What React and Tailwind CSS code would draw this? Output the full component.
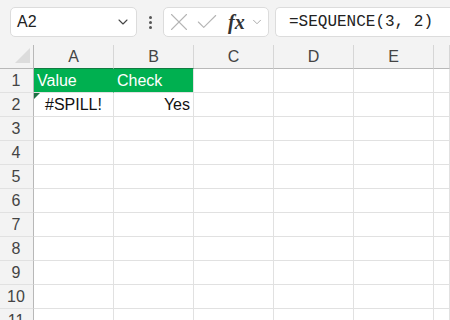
import { ChevronDown, X, Check } from 'lucide-react'

// 이름 상자 + 수식 입력줄 + 시트 격자
const COLS = ['A', 'B', 'C', 'D', 'E', '']
const ROWS = [1, 2, 3, 4, 5, 6, 7, 8, 9, 10, 11]
const GREEN = 'bg-[#00b050]'

function Cell({ row, col }) {
  const base = 'h-6 border-b border-r border-[#e1e1e1] text-[16px] leading-[23px] px-[3px] overflow-hidden whitespace-nowrap'
  if (row === 1 && col === 'A') return <div className={`${base} ${GREEN} border-r-[#00b050] text-white`}>Value</div>
  if (row === 1 && col === 'B') return <div className={`${base} ${GREEN} text-white`}>Check</div>
  if (row === 2 && col === 'A')
    return (
      <div className={`${base} relative text-center text-[15px] text-[#111]`}>
        <span className="absolute left-0 top-0 h-0 w-0 border-r-[6px] border-t-[6px] border-r-transparent border-t-[#1e7145]" />
        #SPILL!
      </div>
    )
  if (row === 2 && col === 'B') return <div className={`${base} text-right text-[#111]`}>Yes</div>
  return <div className={base} />
}

export default function App() {
  return (
    <div className="h-[320px] w-[450px] overflow-hidden bg-white font-['Liberation_Sans',Arial,sans-serif]">
      {/* 수식 입력줄 */}
      <div className="flex h-[45px] items-start bg-[#f3f3f3] pt-[7px]">
        <div className="ml-[10px] flex h-[30px] w-[127px] items-center justify-between rounded-[5px] border border-[#dcdcdc] bg-white pl-[6px] pr-[5px] text-[16px] text-[#222]">
          <span>A2</span>
          <ChevronDown size={16} strokeWidth={1.6} className="text-[#444]" />
        </div>
        <div className="flex h-[30px] w-[26px] flex-col items-center justify-center gap-[2px]">
          <span className="h-[3px] w-[3px] rounded-full bg-[#555]" />
          <span className="h-[3px] w-[3px] rounded-full bg-[#555]" />
          <span className="h-[3px] w-[3px] rounded-full bg-[#555]" />
        </div>
        <div className="flex h-[30px] w-[106px] items-center rounded-[5px] border border-[#dcdcdc] bg-white">
          <X size={30} strokeWidth={0.9} className="text-[#b5b5b5]" />
          <Check size={26} strokeWidth={1.0} className="ml-0 text-[#b5b5b5]" />
          <span className="ml-[8px] font-['Liberation_Serif',serif] text-[20px] font-bold italic leading-none text-[#333]">fx</span>
          <ChevronDown size={14} strokeWidth={1.4} className="ml-[5px] text-[#999]" />
        </div>
        <div className="ml-[6px] flex h-[30px] flex-1 items-center rounded-l-[5px] border border-r-0 border-[#dcdcdc] bg-white pl-[13px] font-['Liberation_Mono',monospace] text-[16px] text-[#222]">
          =SEQUENCE(3, 2)
        </div>
      </div>

      {/* 시트 */}
      <div className="grid grid-cols-[34px_80px_80px_80px_80px_80px_1fr]">
        <div className="relative h-6 border-b border-r border-b-[#b8b8b8] border-r-[#b8b8b8] bg-[#f3f3f3]">
          <span className="absolute bottom-[5px] right-[3px] h-0 w-0 border-b-[15px] border-l-[15px] border-b-[#dcdcdc] border-l-transparent" />
        </div>
        {COLS.map((c, i) => (
          <div
            key={c + i}
            className={`h-6 border-b border-r border-r-[#d6d6d6] bg-[#f3f3f3] text-center text-[16px] leading-[23px] text-[#444] ${
              i < 2 ? 'border-b-[#107c41]' : 'border-b-[#b8b8b8]'
            }`}
          >
            {c}
          </div>
        ))}
        {ROWS.map((r) => (
          <Row key={r} r={r} />
        ))}
      </div>
    </div>
  )
}

function Row({ r }) {
  return (
    <>
      <div className="h-6 border-b border-r border-b-[#e1e1e1] border-r-[#b8b8b8] bg-[#f3f3f3] pr-[1px] text-center text-[16px] leading-[23px] text-[#444]">
        {r}
      </div>
      {COLS.map((c, i) => (
        <Cell key={c + i} row={r} col={c} />
      ))}
    </>
  )
}
